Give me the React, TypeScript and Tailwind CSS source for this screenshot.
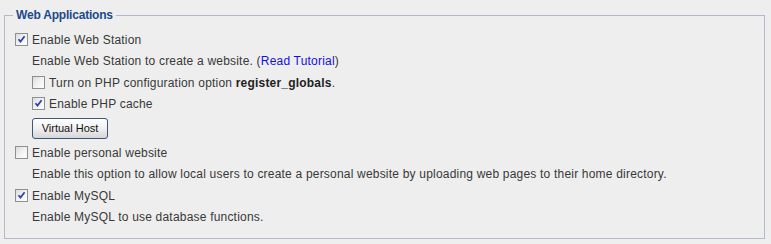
import { ReactNode } from "react";

function Check({ checked }: { checked?: boolean }) {
  return (
    <span className="relative inline-block h-[13px] w-[13px] shrink-0 border border-[#8e8f8f] bg-gradient-to-br from-[#dcdcdc] via-[#f2f2f2] to-[#ffffff]">
      {checked && (
        <svg viewBox="0 0 11 11" className="absolute left-0 top-0 h-[11px] w-[11px]">
          <path d="M2.5 5.2 L4.5 7.6 L8.6 2.2" fill="none" stroke="#2a3fb0" strokeWidth="1.7" />
        </svg>
      )}
    </span>
  );
}

function Option({ checked, children, indent }: { checked?: boolean; children: ReactNode; indent?: boolean }) {
  return (
    <div className={`flex h-[21px] items-center gap-[4px] ${indent ? "pl-[27px]" : "pl-[10px]"}`}>
      <Check checked={checked} />
      <span>{children}</span>
    </div>
  );
}

function Desc({ children }: { children: ReactNode }) {
  return <div className="flex h-[22px] items-center pl-[27px]">{children}</div>;
}

export default function App() {
  return (
    <div className="h-[244px] w-[771px] bg-[#eeeeee] pt-[6px] pl-[4px] pr-[6px] font-['Liberation_Sans',Arial,sans-serif] text-[12px] tracking-[0.2px] text-[#383838]">
      <fieldset className="h-[233px] border border-[#b5b7cb] pb-[6px] pt-[5px]">
        <legend className="ml-[8px] px-[3px] text-[12px] font-bold tracking-[-0.2px] text-[#1b4a8c]">Web Applications</legend>
        <Option checked>Enable Web Station</Option>
        <Desc>
          Enable Web Station to create a website. (<span className="text-[#1010e8]">Read Tutorial</span>)
        </Desc>
        <Option indent>
          Turn on PHP configuration option <b className="text-[#222]">register_globals</b>.
        </Option>
        <Option indent checked>
          Enable PHP cache
        </Option>
        <div className="flex h-[28px] items-center pl-[27px]">
          <button className="h-[21px] w-[76px] rounded-[3px] border border-[#3d5876] bg-gradient-to-b from-[#ffffff] via-[#f0f0f0] to-[#d6d6d6] text-[11px] tracking-normal text-[#111]">
            Virtual Host
          </button>
        </div>
        <Option>Enable personal website</Option>
        <Desc>
          Enable this option to allow local users to create a personal website by uploading web pages to their home directory.
        </Desc>
        <Option checked>Enable MySQL</Option>
        <Desc>Enable MySQL to use database functions.</Desc>
      </fieldset>
    </div>
  );
}
